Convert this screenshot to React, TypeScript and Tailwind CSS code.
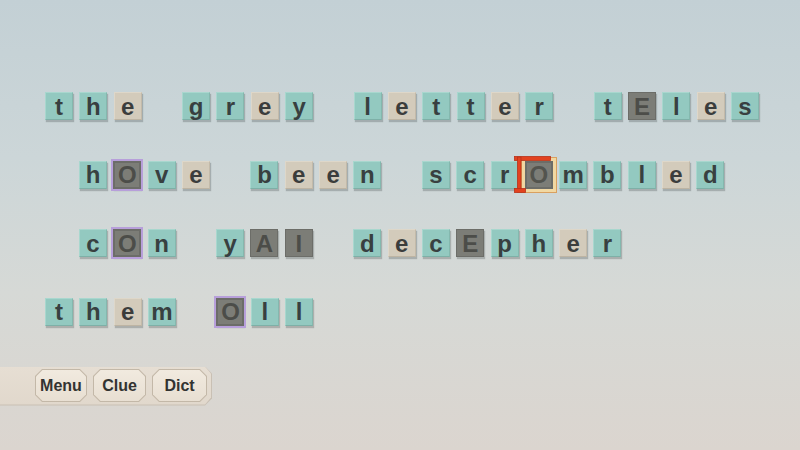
import React from "react";

type Kind = "c" | "v" | "g" | "p" | "s" | "space";

const rows: { text: string; indent: boolean }[] = [
  { text: "the grey letter tEles", indent: false },
  { text: "hOve been scrOmbled", indent: true },
  { text: "cOn yAI decEpher", indent: true },
  { text: "them Oll", indent: false },
];

function kindOf(ch: string, r: number, i: number): Kind {
  if (ch === " ") return "space";
  if (r === 1 && i === 13) return "s";
  if (ch === "O") return "p";
  if (ch >= "A" && ch <= "Z") return "g";
  if ("aeiou".includes(ch)) return "v";
  return "c";
}

function Cursor() {
  return (
    <svg
      className="absolute left-[-13px] top-[-7px] pointer-events-none"
      width="40"
      height="40"
      viewBox="0 0 40 40"
    >
      <rect x="0.5" y="0.5" width="36" height="4" fill="#e2421f" stroke="#b8321a" strokeWidth="0.8" />
      <rect x="3.5" y="1" width="3.5" height="35" fill="#e2421f" stroke="#b8321a" strokeWidth="0.8" />
      <rect x="0.5" y="32.5" width="11" height="4" fill="#e2421f" stroke="#b8321a" strokeWidth="0.8" />
    </svg>
  );
}

function Tile({ ch, kind }: { ch: string; kind: Kind }) {
  if (kind === "space") return <div className="w-[28px] h-[28px] shrink-0" />;
  const base =
    "relative w-[28px] h-[28px] shrink-0 flex items-center justify-center text-[24px] font-bold leading-none shadow-[1px_2px_1px_rgba(60,70,70,0.28)]";
  let cls = "";
  if (kind === "c")
    cls = "bg-[#93c9c0] border border-t-[#a8d7ce] border-l-[#a8d7ce] border-r-[#84b8ae] border-b-[#7eb0a7] text-[#384040]";
  else if (kind === "v")
    cls = "bg-[#d3cbbb] border border-t-[#ded7c9] border-l-[#ded7c9] border-r-[#c3baa9] border-b-[#bdb4a3] text-[#3b3d3c]";
  else if (kind === "g")
    cls = "bg-[#7c7d77] border border-[#6c6d68] text-[#4c4d49]";
  else if (kind === "p")
    cls = "bg-[#7c7d77] border-[2px] border-[#6c6d68] ring-[2px] ring-[#b79fda] text-[#4c4d49]";
  else if (kind === "s")
    cls = "bg-[#7c7d77] border-[2px] border-[#6c6d68] ring-[3px] ring-[#f1d8a2] outline outline-1 outline-[#d9a060] outline-offset-[3px] text-[#53544e]";
  return (
    <div className={base + " " + cls}>
      <span className="mt-[1px]">{ch}</span>
      {kind === "s" && <Cursor />}
    </div>
  );
}

function OctButton({ label, w }: { label: string; w: string }) {
  return (
    <div
      className={
        w +
        " h-[33px] bg-[#c3b8a8] p-[1px] [clip-path:polygon(7px_0,calc(100%-7px)_0,100%_7px,100%_calc(100%-7px),calc(100%-7px)_100%,7px_100%,0_calc(100%-7px),0_7px)]"
      }
    >
      <div className="w-full h-full bg-[linear-gradient(180deg,#f1eadf_0%,#e8dfd2_100%)] flex items-center justify-center text-[16px] font-bold text-[#333331] [clip-path:polygon(6.5px_0,calc(100%-6.5px)_0,100%_6.5px,100%_calc(100%-6.5px),calc(100%-6.5px)_100%,6.5px_100%,0_calc(100%-6.5px),0_6.5px)]">
        {label}
      </div>
    </div>
  );
}

export default function App() {
  return (
    <div
      className="w-[800px] h-[450px] overflow-hidden bg-[linear-gradient(180deg,#c3d0d5_0%,#ccd6d8_35%,#d6d9d6_65%,#dbd5cf_100%)] flex flex-col pt-[92px]"
      style={{ fontFamily: '"Liberation Sans", Arial, sans-serif' }}
    >
      <div className="flex flex-col gap-[40.5px]">
        {rows.map((row, r) => (
          <div
            key={r}
            className={"flex gap-[6.3px] " + (row.indent ? "pl-[79px]" : "pl-[45px]")}
          >
            {row.text.split("").map((ch, i) => (
              <Tile key={i} ch={ch} kind={kindOf(ch, r, i)} />
            ))}
          </div>
        ))}
      </div>
      <div className="mt-[41px] w-[212px] h-[39px] bg-[#c9c0b4] pb-[1px] [clip-path:polygon(0_0,205px_0,212px_7px,212px_32px,205px_39px,0_39px)]">
        <div className="w-full h-full bg-[linear-gradient(180deg,#e6ded3_0%,#e1d8cc_100%)] flex items-center gap-[6px] pl-[35px] [clip-path:polygon(0_0,205px_0,211px_7px,211px_31px,205px_38px,0_38px)]">
          <OctButton label="Menu" w="w-[52px]" />
          <OctButton label="Clue" w="w-[53px]" />
          <OctButton label="Dict" w="w-[55px]" />
        </div>
      </div>
    </div>
  );
}
